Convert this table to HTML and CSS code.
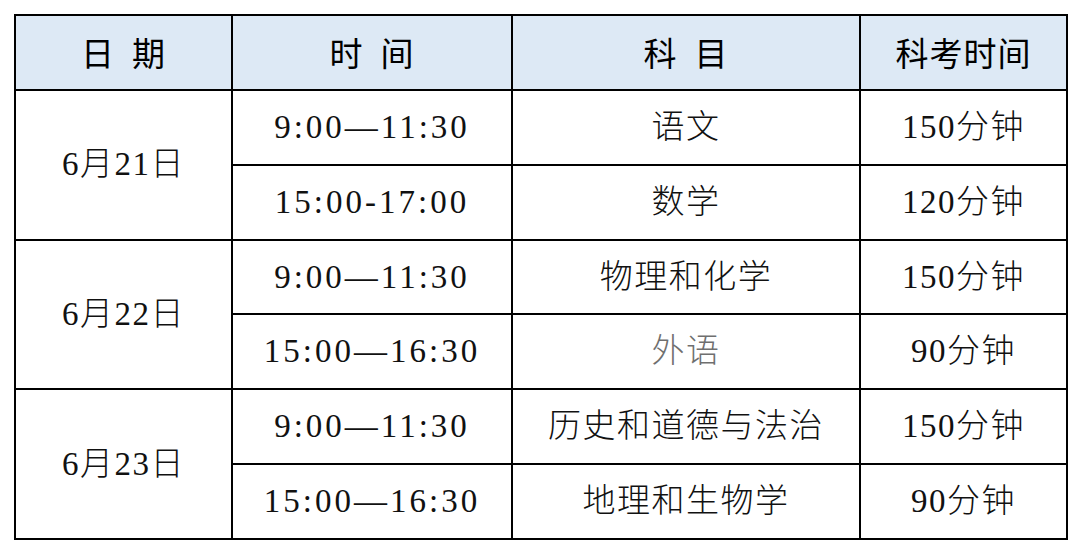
FILE: index.html
```html
<!DOCTYPE html>
<html lang="zh-CN">
<head>
<meta charset="utf-8">
<title>考试时间安排</title>
<link rel="stylesheet" href="styles.css">
</head>
<body>
<table class="schedule">
  <colgroup>
    <col class="c-date">
    <col class="c-time">
    <col class="c-subj">
    <col class="c-dur">
  </colgroup>
  <thead>
    <tr>
      <th>日&nbsp;&nbsp;期</th>
      <th>时&nbsp;&nbsp;间</th>
      <th>科&nbsp;&nbsp;目</th>
      <th>科考时间</th>
    </tr>
  </thead>
  <tbody>
    <tr>
      <td rowspan="2" class="date">6月21日</td>
      <td class="time">9:00—11:30</td>
      <td>语文</td>
      <td>150分钟</td>
    </tr>
    <tr>
      <td class="time">15:00-17:00</td>
      <td>数学</td>
      <td>120分钟</td>
    </tr>
    <tr>
      <td rowspan="2" class="date">6月22日</td>
      <td class="time">9:00—11:30</td>
      <td>物理和化学</td>
      <td>150分钟</td>
    </tr>
    <tr>
      <td class="time">15:00—16:30</td>
      <td class="muted">外语</td>
      <td>90分钟</td>
    </tr>
    <tr>
      <td rowspan="2" class="date">6月23日</td>
      <td class="time">9:00—11:30</td>
      <td>历史和道德与法治</td>
      <td>150分钟</td>
    </tr>
    <tr>
      <td class="time">15:00—16:30</td>
      <td>地理和生物学</td>
      <td>90分钟</td>
    </tr>
  </tbody>
</table>
</body>
</html>
```
FILE: styles.css
```css
html, body {
  margin: 0;
  padding: 0;
  background: #ffffff;
}
body {
  padding: 14px 0 0 14px;
  font-family: "Liberation Serif", "DejaVu Serif", "Noto Sans CJK SC", serif;
  color: #111111;
}
.schedule {
  border-collapse: collapse;
  table-layout: fixed;
  width: 1052px;
}
.c-date { width: 217px; }
.c-time { width: 280px; }
.c-subj { width: 348px; }
.c-dur { width: 207px; }
.schedule th,
.schedule td {
  border: 2px solid #000000;
  height: 72.86px;
  padding: 0;
  text-align: center;
  vertical-align: middle;
  line-height: 1;
}
.schedule th {
  background: #dde9f5;
  font-family: "Noto Sans CJK SC", sans-serif;
  font-size: 33px;
  font-weight: 400;
  letter-spacing: 1px;
  color: #000000;
}
.schedule td {
  font-family: "Liberation Serif", "DejaVu Serif", "Noto Sans CJK SC", serif;
  font-size: 33px;
  font-weight: 300;
  letter-spacing: 1.5px;
}
.schedule td.time {
  letter-spacing: 3px;
}
.schedule td.muted {
  color: #6f6f6f;
}
```
